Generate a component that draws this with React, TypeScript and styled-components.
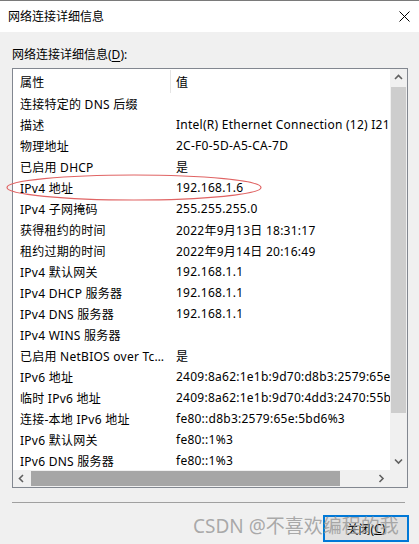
import styled, { createGlobalStyle } from "styled-components";

const GlobalStyle = createGlobalStyle`
  html, body {
    margin: 0;
    padding: 0;
    background: #f0f0f0;
  }
  body {
    font-family: "Noto Sans", "Noto Sans CJK SC", sans-serif;
    font-size: 12px;
    color: #000;
  }
`;

const details: [string, string][] = [
  ["连接特定的 DNS 后缀", ""],
  ["描述", "Intel(R) Ethernet Connection (12) I219-V"],
  ["物理地址", "2C-F0-5D-A5-CA-7D"],
  ["已启用 DHCP", "是"],
  ["IPv4 地址", "192.168.1.6"],
  ["IPv4 子网掩码", "255.255.255.0"],
  ["获得租约的时间", "2022年9月13日 18:31:17"],
  ["租约过期的时间", "2022年9月14日 20:16:49"],
  ["IPv4 默认网关", "192.168.1.1"],
  ["IPv4 DHCP 服务器", "192.168.1.1"],
  ["IPv4 DNS 服务器", "192.168.1.1"],
  ["IPv4 WINS 服务器", ""],
  ["已启用 NetBIOS over Tcpip", "是"],
  ["IPv6 地址", "2409:8a62:1e1b:9d70:d8b3:2579:65e:5bd6"],
  ["临时 IPv6 地址", "2409:8a62:1e1b:9d70:4dd3:2470:55b6:1a2c"],
  ["连接-本地 IPv6 地址", "fe80::d8b3:2579:65e:5bd6%3"],
  ["IPv6 默认网关", "fe80::1%3"],
  ["IPv6 DNS 服务器", "fe80::1%3"],
];

type Dir = "up" | "down" | "left" | "right";

const chevronPoints: Record<Dir, string> = {
  up: "1,5 4.5,1.5 8,5",
  down: "1,1.5 4.5,5 8,1.5",
  left: "5,1 1.5,4.5 5,8",
  right: "1.5,1 5,4.5 1.5,8",
};

const Chevron = ({ dir }: { dir: Dir }) => {
  const vertical = dir === "up" || dir === "down";
  return (
    <svg
      width={vertical ? 9 : 7}
      height={vertical ? 7 : 9}
      viewBox={vertical ? "0 0 9 7" : "0 0 7 9"}
    >
      <polyline
        points={chevronPoints[dir]}
        fill="none"
        stroke="#606060"
        strokeWidth="1.6"
      />
    </svg>
  );
};

const App = () => {
  return (
    <Window>
      <GlobalStyle />
      <TitleBar>
        <Title>网络连接详细信息</Title>
        <CloseIcon>
          <svg width="11" height="11" viewBox="0 0 11 11">
            <path d="M0.5 0.5 L10.5 10.5 M10.5 0.5 L0.5 10.5" stroke="#000" strokeWidth="1" />
          </svg>
        </CloseIcon>
      </TitleBar>
      <Body>
        <Label>
          网络连接详细信息(<u>D</u>):
        </Label>
        <ListBox>
          <ListContent>
            <HeaderRow>
              <HeaderCell $first>属性</HeaderCell>
              <HeaderCell>值</HeaderCell>
            </HeaderRow>
            {details.map(([name, value]) => (
              <Row key={name}>
                <NameCell>{name}</NameCell>
                <ValueCell>{value}</ValueCell>
              </Row>
            ))}
          </ListContent>
          <VScroll>
            <ArrowButton $size={17}>
              <Chevron dir="up" />
            </ArrowButton>
            <VThumb />
            <VTrack />
            <ArrowButton $size={17}>
              <Chevron dir="down" />
            </ArrowButton>
          </VScroll>
          <HScroll>
            <ArrowButton $size={17}>
              <Chevron dir="left" />
            </ArrowButton>
            <HThumb />
            <HTrack />
            <ArrowButton $size={17}>
              <Chevron dir="right" />
            </ArrowButton>
          </HScroll>
          <Corner />
        </ListBox>
        <Separator />
        <Footer>
          <CloseButton>
            关闭(<u>C</u>)
          </CloseButton>
        </Footer>
      </Body>
      <Highlight>
        <svg width="260" height="28" viewBox="0 0 260 28">
          <ellipse cx="129" cy="13.5" rx="127" ry="12.5" fill="none" stroke="#e06464" strokeWidth="1.2" />
        </svg>
      </Highlight>
      <Watermark>CSDN @不喜欢编程的我</Watermark>
    </Window>
  );
};

export default App;

const Window = styled.div`
  position: relative;
  width: 419px;
  height: 544px;
  overflow: hidden;
  background: #f0f0f0;
  border-top: 1px solid #7a7a7a;
  box-sizing: border-box;
`;

const TitleBar = styled.div`
  height: 31px;
  background: #fff;
  display: flex;
  align-items: center;
  justify-content: space-between;
  padding: 0 9px 0 8px;
`;

const Title = styled.span`
  font-size: 12px;
  line-height: 16px;
`;

const CloseIcon = styled.span`
  display: flex;
  width: 11px;
  height: 11px;
`;

const Body = styled.div`
  padding: 0 11px 0 12px;
`;

const Label = styled.div`
  margin-top: 15px;
  height: 16px;
  line-height: 16px;
  font-size: 12px;

  u {
    text-decoration-thickness: 1px;
    text-underline-offset: 2px;
  }
`;

const ListBox = styled.div`
  margin-top: 5px;
  width: 396px;
  height: 420px;
  box-sizing: border-box;
  border: 1px solid #828790;
  background: #fff;
  display: grid;
  grid-template-columns: 1fr 17px;
  grid-template-rows: 1fr 17px;
`;

const ListContent = styled.div`
  overflow: hidden;
  min-width: 0;
  min-height: 0;
  letter-spacing: 0.25px;
`;

const HeaderRow = styled.div`
  display: flex;
  height: 24px;
  align-items: center;
`;

const HeaderCell = styled.div<{ $first?: boolean }>`
  box-sizing: border-box;
  width: ${(p) => (p.$first ? "158px" : "auto")};
  height: ${(p) => (p.$first ? "23px" : "auto")};
  margin-top: 1px;
  padding-left: ${(p) => (p.$first ? "7px" : "5px")};
  border-right: ${(p) => (p.$first ? "1px solid #e5e5e5" : "none")};
  display: flex;
  align-items: center;
`;

const Row = styled.div`
  display: flex;
  height: 21px;
  align-items: center;
  white-space: nowrap;
`;

const NameCell = styled.div`
  box-sizing: border-box;
  width: 158px;
  flex-shrink: 0;
  padding: 0 4px 0 7px;
  overflow: hidden;
  text-overflow: ellipsis;
`;

const ValueCell = styled.div`
  padding-left: 5px;
  overflow: hidden;
  white-space: nowrap;
`;

const VScroll = styled.div`
  background: #f0f0f0;
  display: flex;
  flex-direction: column;
  min-height: 0;
`;

const HScroll = styled.div`
  background: #f0f0f0;
  display: flex;
  min-width: 0;
`;

const Corner = styled.div`
  background: #f0f0f0;
`;

const ArrowButton = styled.div<{ $size: number }>`
  width: ${(p) => p.$size}px;
  height: ${(p) => p.$size}px;
  flex-shrink: 0;
  display: flex;
  align-items: center;
  justify-content: center;
`;

const VThumb = styled.div`
  height: 326px;
  margin: 1px 1px 0;
  background: #cdcdcd;
`;

const VTrack = styled.div`
  flex: 1;
`;

const HThumb = styled.div`
  width: 309px;
  margin: 1px 0 1px 1px;
  background: #a6a6a6;
`;

const HTrack = styled.div`
  flex: 1;
`;

const Separator = styled.div`
  margin: 14px 3px 0 0;
  height: 1px;
  background: #a0a0a0;
`;

const Footer = styled.div`
  display: flex;
  justify-content: flex-end;
  padding-top: 12px;
  margin-right: -1px;
`;

const CloseButton = styled.div`
  box-sizing: border-box;
  width: 86px;
  height: 27px;
  border: 2px solid #0078d7;
  background: #e1e1e1;
  display: flex;
  align-items: center;
  justify-content: center;
  font-size: 12px;

  u {
    text-decoration-thickness: 1px;
  }
`;

const Highlight = styled.div`
  position: absolute;
  left: 5px;
  top: 173px;
  pointer-events: none;
  display: flex;
`;

const Watermark = styled.div`
  position: absolute;
  left: 193px;
  top: 513px;
  font-family: "Noto Sans", "Noto Sans CJK SC", sans-serif;
  font-size: 19px;
  line-height: 24px;
  color: rgba(150, 150, 150, 0.8);
  white-space: nowrap;
  pointer-events: none;
`;
